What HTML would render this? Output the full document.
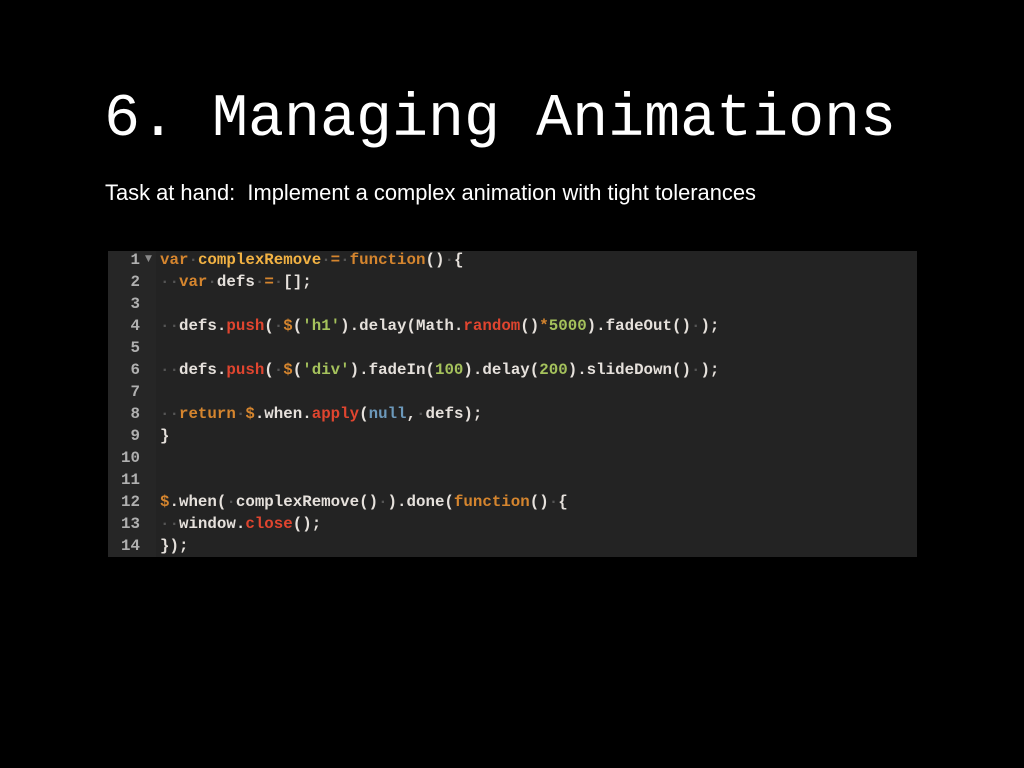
<!DOCTYPE html>
<html><head><meta charset="utf-8"><style>
html,body{margin:0;padding:0;background:#000;width:1024px;height:768px;overflow:hidden}
.t{position:absolute;left:104px;top:80px;font:60px/80px "Liberation Mono",monospace;color:#fff;white-space:pre}
.s{position:absolute;left:105px;top:179px;font:21.9px/28px "Liberation Sans",sans-serif;color:#fff;white-space:pre}
.code{position:absolute;left:108px;top:251px;width:809px;height:306px;background:#232323}
.g{position:absolute;left:0;top:0;width:48px;height:306px;background:#262626}
pre{margin:0;position:absolute;top:-2px;font:bold 15.8px/22px "Liberation Mono",monospace;color:#e6e1dc}
.n{left:0;width:32px;text-align:right;color:#b0b0b0}
.a{position:absolute;left:37px;top:3px;font:9px "DejaVu Sans",sans-serif;color:#888}
.c{left:52px}
.k{color:#d5852e}.f{color:#f2b243}.r{color:#e0452f}.q{color:#a5c25c}.b{color:#6c99bb}.d{color:#555}
</style></head><body>
<div class="t">6. Managing Animations</div>
<div class="s">Task at hand:  Implement a complex animation with tight tolerances</div>
<div class="code"><div class="g"></div><div class="a">▼</div>
<pre class="n">1
2
3
4
5
6
7
8
9
10
11
12
13
14</pre>
<pre class="c"><span class="k">var</span><span class="d">·</span><span class="f">complexRemove</span><span class="d">·</span><span class="k">=</span><span class="d">·</span><span class="k">function</span>()<span class="d">·</span>{
<span class="d">··</span><span class="k">var</span><span class="d">·</span>defs<span class="d">·</span><span class="k">=</span><span class="d">·</span>[];

<span class="d">··</span>defs.<span class="r">push</span>(<span class="d">·</span><span class="k">$</span>(<span class="q">'h1'</span>).delay(Math.<span class="r">random</span>()<span class="k">*</span><span class="q">5000</span>).fadeOut()<span class="d">·</span>);

<span class="d">··</span>defs.<span class="r">push</span>(<span class="d">·</span><span class="k">$</span>(<span class="q">'div'</span>).fadeIn(<span class="q">100</span>).delay(<span class="q">200</span>).slideDown()<span class="d">·</span>);

<span class="d">··</span><span class="k">return</span><span class="d">·</span><span class="k">$</span>.when.<span class="r">apply</span>(<span class="b">null</span>,<span class="d">·</span>defs);
}


<span class="k">$</span>.when(<span class="d">·</span>complexRemove()<span class="d">·</span>).done(<span class="k">function</span>()<span class="d">·</span>{
<span class="d">··</span>window.<span class="r">close</span>();
});</pre>
</div>
</body></html>
